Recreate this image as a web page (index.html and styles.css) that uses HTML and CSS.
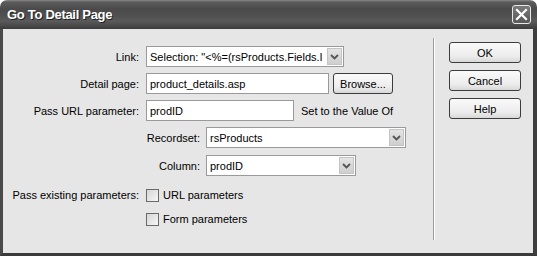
FILE: index.html
```html
<!DOCTYPE html>
<html lang="en">

<head>
    <meta charset="UTF-8">
    <title>Go To Detail Page</title>
    <link rel="stylesheet" href="styles.css">
</head>

<body>
    <div class="window">
        <div class="titlebar">
            <span class="title">Go To Detail Page</span>
            <span class="close">
                <svg width="13" height="13" viewBox="0 0 13 13">
                    <path d="M2 2 L11 11 M11 2 L2 11" stroke="#fff" stroke-width="2.2" stroke-linecap="square" />
                </svg>
            </span>
        </div>

        <div class="client">
            <div class="form">
                <div class="row">
                    <label>Link:</label>
                    <div class="select select-link">
                        <span class="select-text">Selection: "&lt;%=(rsProducts.Fields.I</span>
                        <span class="arrow"><svg width="9" height="6" viewBox="0 0 9 6"><path d="M1 1 L4.5 4.5 L8 1" stroke="#555" stroke-width="1.8" fill="none" /></svg></span>
                    </div>
                </div>

                <div class="row">
                    <label>Detail page:</label>
                    <div class="inline">
                        <div class="input input-page">product_details.asp</div>
                        <button class="btn btn-browse">Browse...</button>
                    </div>
                </div>

                <div class="row">
                    <label>Pass URL parameter:</label>
                    <div class="inline">
                        <div class="input input-param">prodID</div>
                        <span class="note">Set to the Value Of</span>
                    </div>
                </div>

                <div class="row row-sub">
                    <label>Recordset:</label>
                    <div class="select select-rs">
                        <span class="select-text">rsProducts</span>
                        <span class="arrow"><svg width="9" height="6" viewBox="0 0 9 6"><path d="M1 1 L4.5 4.5 L8 1" stroke="#555" stroke-width="1.8" fill="none" /></svg></span>
                    </div>
                </div>

                <div class="row row-sub row-col">
                    <label>Column:</label>
                    <div class="select select-col">
                        <span class="select-text">prodID</span>
                        <span class="arrow"><svg width="9" height="6" viewBox="0 0 9 6"><path d="M1 1 L4.5 4.5 L8 1" stroke="#555" stroke-width="1.8" fill="none" /></svg></span>
                    </div>
                </div>

                <div class="row row-check">
                    <label>Pass existing parameters:</label>
                    <div class="inline">
                        <span class="checkbox"></span>
                        <span class="check-label">URL parameters</span>
                    </div>
                </div>

                <div class="row row-check">
                    <label></label>
                    <div class="inline">
                        <span class="checkbox"></span>
                        <span class="check-label">Form parameters</span>
                    </div>
                </div>
            </div>

            <div class="separator"></div>

            <div class="buttons">
                <button class="btn btn-side">OK</button>
                <button class="btn btn-side">Cancel</button>
                <button class="btn btn-side">Help</button>
            </div>
        </div>
    </div>
</body>

</html>
```

FILE: styles.css
```css
body {
    margin: 0;
    background-color: #fff;
    font-family: "Liberation Sans", Arial, sans-serif;
    font-size: 11px;
    color: #000;
}

.window {
    width: 537px;
    height: 256px;
    display: flex;
    flex-direction: column;
}

.titlebar {
    height: 29px;
    flex: none;
    display: flex;
    align-items: center;
    justify-content: space-between;
    padding: 0 7px 1px 7px;
    box-sizing: border-box;
    border-radius: 7px 7px 0 0;
    background: linear-gradient(#8a8a8a 0, #5c5c5c 2px, #4a4a4a 9px, #505050 16px, #5a5a5a 21px, #444 27px, #3a3a3a 29px);
}

.title {
    color: #fff;
    font-weight: bold;
    font-size: 13px;
    letter-spacing: -0.3px;
    text-shadow: 1px 1px 0 #222;
}

.close {
    width: 19px;
    height: 19px;
    box-sizing: border-box;
    border: 1px solid #e8e8e8;
    border-radius: 3px;
    background: linear-gradient(#7a7a7a, #585858);
    display: flex;
    align-items: center;
    justify-content: center;
    margin-right: -1px;
}

.client {
    flex: 1;
    display: flex;
    background-color: #e6e6e6;
    border-left: 3px solid #4a4a4a;
    border-right: 4px solid #3e3e3e;
    border-bottom: 3px solid #3a3a3a;
}

.form {
    width: 430px;
    padding-top: 17px;
    display: flex;
    flex-direction: column;
    gap: 6px;
}

.row {
    display: grid;
    grid-template-columns: 136px 1fr;
    column-gap: 7px;
    align-items: center;
    height: 21px;
}

.row label {
    text-align: right;
    white-space: nowrap;
}

.row-sub {
    grid-template-columns: 197px 1fr;
    column-gap: 6px;
}

.row-col {
    margin-top: 1px;
}

.row-check {
    height: 18px;
}

.row-check:nth-of-type(6) {
    margin-top: 4px;
}

.inline {
    display: flex;
    align-items: center;
}

.input,
.select {
    height: 21px;
    box-sizing: border-box;
    background-color: #fff;
    border: 1px solid #9a9a9a;
    padding: 0 3px;
    display: flex;
    align-items: center;
    white-space: nowrap;
    overflow: hidden;
}

.input-page {
    width: 183px;
}

.input-param {
    width: 148px;
}

.note {
    margin-left: 7px;
}

.select {
    position: relative;
    padding-right: 18px;
}

.select-text {
    overflow: hidden;
}

.select-link {
    width: 198px;
}

.select-rs {
    width: 200px;
}

.select-col {
    width: 150px;
}

.arrow {
    position: absolute;
    right: 1px;
    top: 1px;
    width: 15px;
    height: 17px;
    box-sizing: border-box;
    border: 1px solid #c4c4c4;
    background: linear-gradient(#e4e4e4, #cfcfcf);
    display: flex;
    align-items: center;
    justify-content: center;
}

.btn {
    font-family: "Liberation Sans", Arial, sans-serif;
    font-size: 11px;
    color: #000;
    height: 21px;
    box-sizing: border-box;
    border: 1px solid #3c3c3c;
    border-radius: 3px;
    background: linear-gradient(#fafafa, #ececec 70%, #d8d8d8);
    padding: 0;
}

.btn-browse {
    width: 60px;
    margin-left: 4px;
}

.btn-side {
    width: 72px;
}

.checkbox {
    width: 13px;
    height: 13px;
    box-sizing: border-box;
    border: 1px solid #6a6a6a;
    background: linear-gradient(135deg, #d6d6d6, #f6f6f6);
}

.check-label {
    margin-left: 4px;
}

.separator {
    width: 1px;
    margin-top: 9px;
    height: 202px;
    background-color: #9c9c9c;
    border-right: 1px solid #fff;
}

.buttons {
    padding-top: 13px;
    padding-left: 14px;
    display: flex;
    flex-direction: column;
    gap: 7px;
}
```
